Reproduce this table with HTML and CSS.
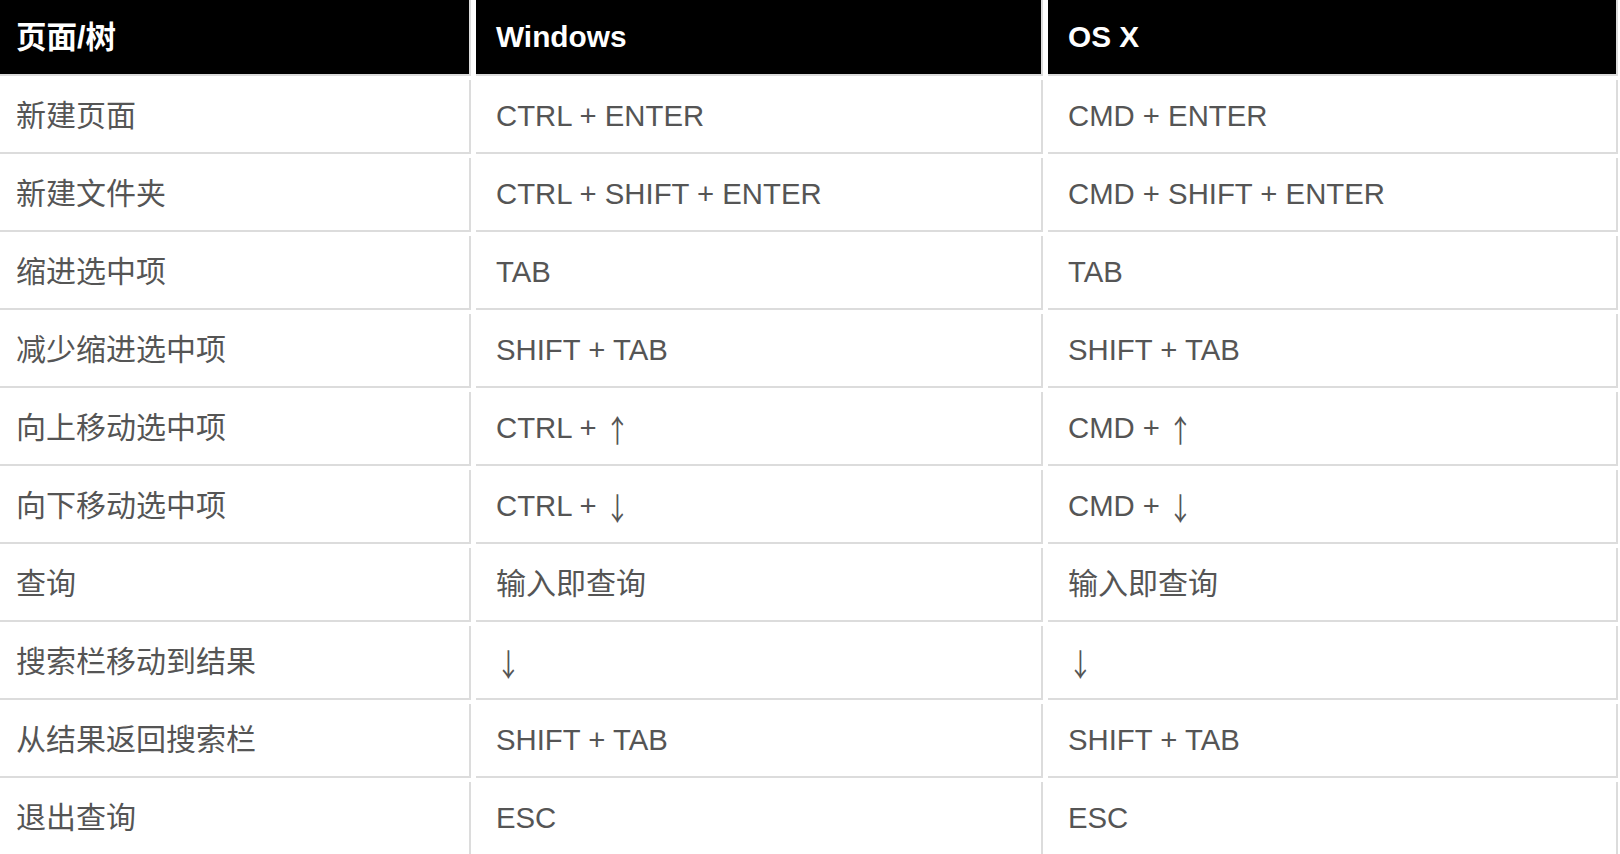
FILE: index.html
```html
<!DOCTYPE html>
<html lang="zh-CN">
<head>
<meta charset="utf-8">
<title>快捷键</title>
<link rel="stylesheet" href="styles.css">
</head>
<body>
<table class="keys">
  <thead>
    <tr>
      <th class="c1 zh">页面/树</th>
      <th class="c2">Windows</th>
      <th class="c3">OS X</th>
    </tr>
  </thead>
  <tbody>
    <tr><td class="zh">新建页面</td><td>CTRL + ENTER</td><td>CMD + ENTER</td></tr>
    <tr><td class="zh">新建文件夹</td><td>CTRL + SHIFT + ENTER</td><td>CMD + SHIFT + ENTER</td></tr>
    <tr><td class="zh">缩进选中项</td><td>TAB</td><td>TAB</td></tr>
    <tr><td class="zh">减少缩进选中项</td><td>SHIFT + TAB</td><td>SHIFT + TAB</td></tr>
    <tr><td class="zh">向上移动选中项</td><td>CTRL + <span class="arrow">↑</span></td><td>CMD + <span class="arrow">↑</span></td></tr>
    <tr><td class="zh">向下移动选中项</td><td>CTRL + <span class="arrow">↓</span></td><td>CMD + <span class="arrow">↓</span></td></tr>
    <tr><td class="zh">查询</td><td class="zh">输入即查询</td><td class="zh">输入即查询</td></tr>
    <tr><td class="zh">搜索栏移动到结果</td><td><span class="arrow">↓</span></td><td><span class="arrow">↓</span></td></tr>
    <tr><td class="zh">从结果返回搜索栏</td><td>SHIFT + TAB</td><td>SHIFT + TAB</td></tr>
    <tr><td class="zh">退出查询</td><td>ESC</td><td>ESC</td></tr>
  </tbody>
</table>
</body>
</html>
```
FILE: styles.css
```css
html, body {
  margin: 0;
  padding: 0;
  background: #fff;
  overflow: hidden;
}

body {
  width: 1620px;
  height: 854px;
  font-family: "Liberation Sans", "Noto Sans CJK SC", Arial, sans-serif;
}

.keys {
  border-collapse: separate;
  border-spacing: 5px 4px;
  table-layout: fixed;
  margin: -4px 0 0 -9px;
  width: 1632px;
}

.keys th,
.keys td {
  box-sizing: border-box;
  border-right: 2px solid #dcdcdc;
  border-bottom: 2px solid #dcdcdc;
  padding: 0 0 0 20px;
  text-align: left;
  vertical-align: middle;
  white-space: nowrap;
  line-height: 1.2;
}

.keys th {
  height: 76px;
  background: #000;
  color: #fff;
  font-weight: bold;
  font-size: 29.8px;
}

.keys td {
  height: 74px;
  color: #555;
  font-size: 29.3px;
  font-weight: normal;
}

.keys .zh {
  font-size: 30px;
}

.keys th.zh {
  font-size: 30.5px;
}

.arrow {
  font-family: "Noto Sans CJK SC", sans-serif;
  font-size: 31px;
  line-height: 1;
  display: inline-block;
  vertical-align: -4px;
  transform: scaleX(0.8);
  transform-origin: left center;
}

.keys .c1 { width: 475px; }
.keys .c2 { width: 567px; }
.keys .c3 { width: 570px; }
```
